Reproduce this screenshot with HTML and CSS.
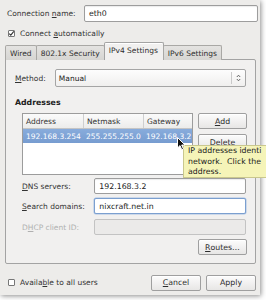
FILE: index.html
```html
<!DOCTYPE html>
<html lang="en">
<head>
<meta charset="UTF-8">
<title>Editing eth0</title>
<link rel="stylesheet" href="styles.css">
</head>
<body>
  <div class="screen">
    <div class="dialog">
      <div class="name-row">
        <span class="lbl name-lbl">Connection <u>n</u>ame:</span>
        <div class="entry name-entry">eth0</div>
      </div>
      <div class="check-row auto-row">
        <span class="check">
          <svg width="7" height="7" viewBox="0 0 7 7"><path d="M1.2 3.6 L2.8 5.2 L5.8 1.4" fill="none" stroke="#333" stroke-width="1.1"/></svg>
        </span>
        <span>Connect <u>a</u>utomatically</span>
      </div>

      <div class="notebook">
        <div class="tabs">
          <div class="tab">Wired</div>
          <div class="tab">802.1x Security</div>
          <div class="tab tab-active">IPv4 Settings</div>
          <div class="tab">IPv6 Settings</div>
        </div>
        <div class="panel">
          <div class="method-row">
            <span class="lbl method-lbl"><u>M</u>ethod:</span>
            <div class="combo">
              <span class="combo-text">Manual</span>
              <span class="combo-arrows">
                <svg width="5" height="8" viewBox="0 0 5 8"><path d="M0.8 3 L2.5 1.2 L4.2 3 M0.8 5 L2.5 6.8 L4.2 5" fill="none" stroke="#555" stroke-width="0.9"/></svg>
              </span>
            </div>
          </div>

          <div class="section-title">Addresses</div>
          <div class="addr-block">
            <div class="table">
              <div class="thead">
                <span class="col col-addr">Address</span>
                <span class="col col-mask">Netmask</span>
                <span class="col col-gw">Gateway</span>
              </div>
              <div class="trow trow-sel">
                <span class="col col-addr">192.168.3.254</span>
                <span class="col col-mask">255.255.255.0</span>
                <span class="col col-gw">192.168.3.2</span>
              </div>
            </div>
            <div class="side-buttons">
              <div class="button"><u>A</u>dd</div>
              <div class="button"><u>D</u>elete</div>
            </div>
          </div>

          <div class="form-row dns-row">
            <span class="lbl form-lbl"><u>D</u>NS servers:</span>
            <div class="entry form-entry">192.168.3.2</div>
          </div>
          <div class="form-row search-row">
            <span class="lbl form-lbl"><u>S</u>earch domains:</span>
            <div class="entry form-entry entry-focus">nixcraft.net.in</div>
          </div>
          <div class="form-row dhcp-row">
            <span class="lbl form-lbl lbl-disabled">D<u>H</u>CP client ID:</span>
            <div class="entry form-entry entry-disabled"></div>
          </div>
          <div class="routes-row">
            <div class="button"><u>R</u>outes…</div>
          </div>
        </div>
      </div>

      <div class="footer">
        <div class="check-row">
          <span class="check"></span>
          <span>Availa<u>b</u>le to all users</span>
        </div>
        <div class="footer-buttons">
          <div class="button"><u>C</u>ancel</div>
          <div class="button">Apply</div>
        </div>
      </div>
    </div>

    <div class="tooltip">
      <div>IP addresses identi</div>
      <div>network.&nbsp; Click the</div>
      <div>address.</div>
    </div>

    <svg class="cursor" width="10" height="14" viewBox="0 0 10 14">
      <path d="M0.5 0.5 L0.5 11 L3 8.6 L4.8 12.8 L6.5 12 L4.7 8 L8 8 Z" fill="#111" stroke="#fff" stroke-width="1"/>
    </svg>
  </div>
</body>
</html>
```

FILE: styles.css
```css
:root {
  --dialog-bg: #edecea;
  --panel-bg: #f1f0ef;
  --text-color: #333;
  --border: #a3a3a3;
  --entry-border: #9d9d9d;
  --select-blue: #7fa3d5;
}

body {
  margin: 0;
  background: #fff;
  font-family: "DejaVu Sans", sans-serif;
  font-size: 7.5px;
  color: var(--text-color);
}

u {
  text-decoration-thickness: 0.6px;
  text-underline-offset: 1px;
}

.screen {
  position: relative;
  width: 266px;
  height: 300px;
  overflow: hidden;
}

.dialog {
  width: 260px;
  height: 295px;
  box-sizing: border-box;
  padding-top: 5px;
  background: var(--dialog-bg);
  box-shadow: 1px 1px 5px rgba(0,0,0,0.45);
}

.lbl {
  white-space: nowrap;
}

/* top rows */
.name-row {
  display: flex;
  align-items: center;
  height: 17px;
}

.name-lbl {
  width: 77px;
  padding-left: 7px;
}

.entry {
  box-sizing: border-box;
  height: 16px;
  padding: 0 4px;
  display: flex;
  align-items: center;
  background: #fff;
  border: 1px solid var(--entry-border);
  border-radius: 2px;
  box-shadow: inset 0 1px 1px rgba(0,0,0,0.08);
  color: #222;
  font-size: 7.8px;
}

.name-entry {
  width: 174px;
  height: 17px;
}

.check-row {
  display: flex;
  align-items: center;
  height: 10px;
  gap: 5px;
  padding-left: 8px;
}

.auto-row {
  margin-top: 6px;
}

.check {
  box-sizing: border-box;
  width: 7px;
  height: 7px;
  background: #fff;
  border: 1px solid #777;
  border-radius: 1px;
  display: flex;
  align-items: center;
  justify-content: center;
}

.check svg {
  flex: none;
}

/* notebook */
.notebook {
  margin-top: 4px;
  margin-left: 5px;
  width: 251px;
}

.tabs {
  display: flex;
  align-items: flex-end;
  height: 18px;
  position: relative;
  z-index: 1;
  margin-bottom: -1px;
}

.tab {
  box-sizing: border-box;
  height: 15px;
  padding: 0 4px;
  display: flex;
  align-items: center;
  background: linear-gradient(#e4e3e1, #d6d5d2);
  border: 1px solid #a9a8a5;
  border-bottom: none;
  border-radius: 2px 2px 0 0;
  margin-right: -1px;
  white-space: nowrap;
  color: #2e2e2e;
}

.tab-active {
  height: 18px;
  padding-bottom: 2px;
  background: var(--panel-bg);
  border-color: #a3a3a3;
  box-shadow: inset 0 1px 0 #fff;
  padding-left: 4px;
  padding-right: 5px;
}

.panel {
  box-sizing: border-box;
  height: 205px;
  padding: 9px 9px 0 9px;
  background: var(--panel-bg);
  border: 1px solid var(--border);
  border-radius: 0 2px 2px 2px;
}

.method-row {
  display: flex;
  align-items: center;
  height: 18px;
}

.method-lbl {
  width: 40px;
}

.combo {
  box-sizing: border-box;
  width: 192px;
  height: 18px;
  display: flex;
  align-items: center;
  background: linear-gradient(#fdfdfd, #f0efee);
  border: 1px solid #a5a5a5;
  border-radius: 2px;
}

.combo-text {
  flex: 1;
  padding-left: 3px;
  color: #222;
}

.combo-arrows {
  width: 13px;
  height: 12px;
  border-left: 1px solid #c9c9c9;
  display: flex;
  align-items: center;
  justify-content: center;
}

.section-title {
  margin-top: 11px;
  height: 10px;
  line-height: 10px;
  font-weight: bold;
  font-size: 7.8px;
  color: #222;
}

.addr-block {
  display: flex;
  gap: 5px;
  margin-top: 5px;
  padding-left: 7px;
}

.table {
  box-sizing: border-box;
  width: 171px;
  height: 62px;
  background: #fff;
  border: 1px solid #9c9c9c;
}

.thead,
.trow {
  display: flex;
  height: 14px;
  align-items: center;
}

.thead {
  background: linear-gradient(#fbfbfb, #ececeb);
  border-bottom: 1px solid #c4c4c4;
  color: #333;
}

.thead .col + .col {
  border-left: 1px solid #cfcfcf;
}

.col {
  box-sizing: border-box;
  height: 100%;
  display: flex;
  align-items: center;
  padding-left: 3px;
  white-space: nowrap;
}

.col-addr { width: 60px; }
.col-mask { width: 60px; }
.col-gw { width: 49px; }

.trow-sel {
  background: linear-gradient(#88acdc, #779cd0);
  color: #fff;
}

.side-buttons {
  display: flex;
  flex-direction: column;
  gap: 5px;
}

.button {
  box-sizing: border-box;
  width: 49px;
  height: 16px;
  display: flex;
  align-items: center;
  justify-content: center;
  background: linear-gradient(#fcfcfc, #e7e6e5);
  border: 1px solid #9f9f9f;
  border-radius: 2px;
  box-shadow: inset 0 1px 0 #fff;
  color: #2c2c2c;
  font-size: 7.8px;
}

.form-row {
  display: flex;
  align-items: center;
  padding-left: 7px;
}

.dns-row { margin-top: 3px; }
.search-row { margin-top: 4px; }
.dhcp-row { margin-top: 5px; }

.form-lbl {
  width: 73px;
}

.form-entry {
  width: 153px;
}

.entry-focus {
  border-color: #7b9fcf;
  box-shadow: 0 0 0 0.5px #a9c2e6;
}

.entry-disabled {
  background: #ebeae9;
  border-color: #c3c3c3;
  box-shadow: none;
}

.lbl-disabled {
  color: #b0b0b0;
}

.routes-row {
  display: flex;
  justify-content: flex-end;
  margin-top: 4px;
  width: 232px;
}

/* footer */
.footer {
  display: flex;
  align-items: center;
  justify-content: space-between;
  margin-top: 11px;
  height: 15px;
  padding-right: 4px;
}

.footer-buttons {
  display: flex;
  gap: 5px;
}

.footer-buttons .button {
  width: 50px;
  height: 16px;
}

/* overlays */
.tooltip {
  position: absolute;
  left: 183px;
  top: 145px;
  width: 90px;
  height: 33px;
  box-sizing: border-box;
  padding: 0 4px;
  background: #f5f4b8;
  border: 1px solid #c9c78e;
  border-right: none;
  color: #1a1a1a;
  font-size: 7.8px;
  line-height: 10.5px;
  white-space: nowrap;
}

.cursor {
  position: absolute;
  left: 177px;
  top: 137px;
}
```
